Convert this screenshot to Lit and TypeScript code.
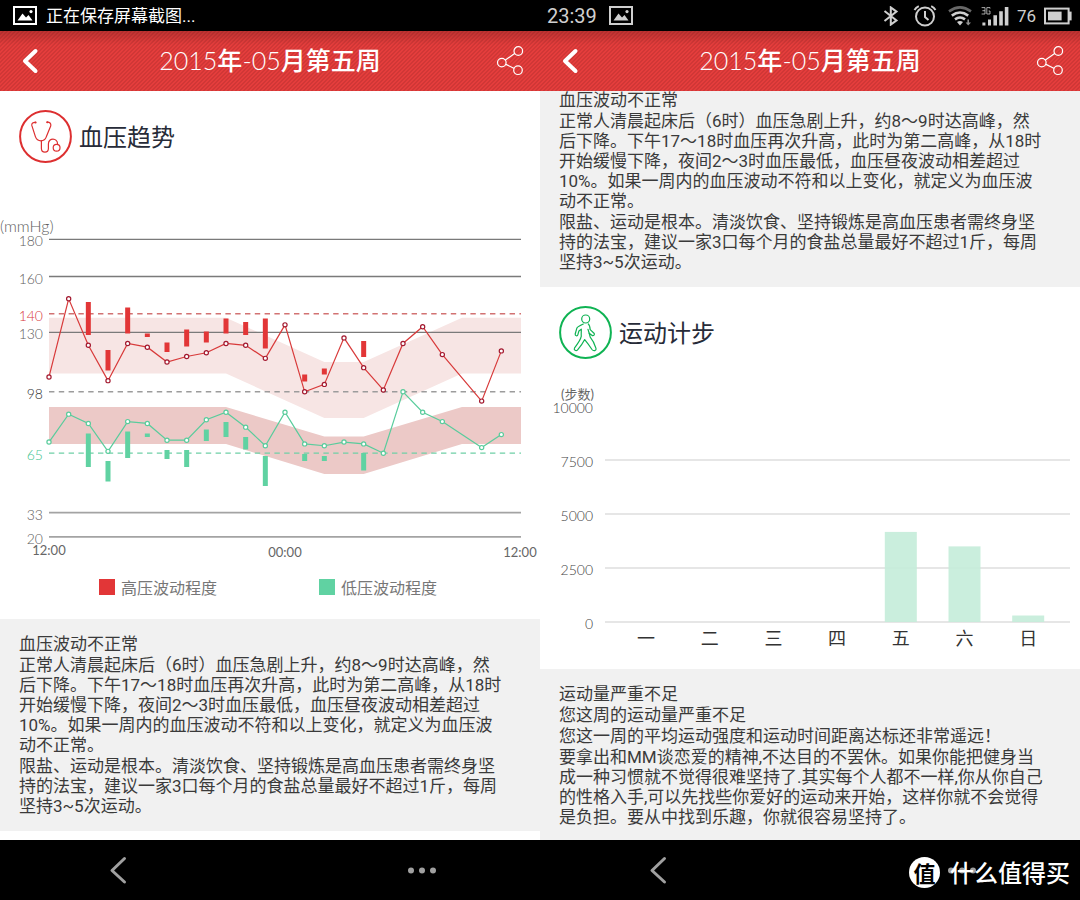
import { LitElement, html, svg, css } from "lit";
import { customElement, property } from "lit/decorators.js";

const CJK = css`"Noto Sans CJK SC", sans-serif`;

/* ---------- blood pressure trend ---------- */

const LEFT = 49;
const RIGHT = 521;
const HOUR = (RIGHT - LEFT) / 24;
const px = (hour: number) => LEFT + hour * HOUR;
const py = (mmHg: number) => 239.3 + (180 - mmHg) * 1.86;

type Reading = [hour: number, value: number];
type Span = [hour: number, top: number, bottom: number];

const HIGH: Reading[] = [
  [0, 106], [1, 148], [2, 123], [3, 104], [4, 124], [5, 122], [6, 114], [7, 117],
  [8, 119], [9, 124], [10, 123], [11, 116], [12, 134], [13, 98], [14, 102], [15, 127],
  [16, 111], [17, 99], [18, 124], [19, 133], [20, 118], [22, 93], [23, 120],
];
const LOW: Reading[] = [
  [0, 71], [1, 86], [2, 81], [3, 66], [4, 82], [5, 81], [6, 72], [7, 72],
  [8, 83], [9, 87], [10, 79], [11, 69], [12, 87], [13, 70], [14, 69], [15, 71],
  [16, 70], [17, 65], [18, 98], [19, 87], [20, 82], [22, 68], [23, 75],
];
const HIGH_SWING: Span[] = [
  [2, 302, 335], [3, 350, 370.5], [4, 307.5, 333.5], [5, 333.5, 337], [6, 342.5, 352],
  [7, 329.5, 346.5], [8, 331.5, 342.5], [9, 318.5, 333.5], [10, 322, 335],
  [11, 318.5, 348.5], [13, 374.5, 381.5], [14, 368.5, 374.5], [16, 341, 357],
];
const LOW_SWING: Span[] = [
  [2, 433.5, 467], [3, 461, 481.5], [4, 431.5, 458], [5, 433.5, 437], [6, 450, 459],
  [7, 450, 467], [8, 429.5, 441], [9, 422, 437], [10, 437, 449.5],
  [11, 456, 486], [13, 454, 461], [14, 456, 461], [16, 453, 470.5],
];
const LEVELS: { value: number; kind: string }[] = [
  { value: 180, kind: "solid" },
  { value: 160, kind: "solid" },
  { value: 140, kind: "high" },
  { value: 130, kind: "solid" },
  { value: 98, kind: "mid" },
  { value: 65, kind: "low" },
  { value: 33, kind: "pale" },
  { value: 20, kind: "pale" },
];

const band = (top: number, dipTop: number, bottom: number, dipBottom: number) =>
  [
    [px(0), top], [px(9), top], [px(14), dipTop], [px(16), dipTop], [px(21), top], [px(24), top],
    [px(24), bottom], [px(21), bottom], [px(16), dipBottom], [px(14), dipBottom], [px(9), bottom], [px(0), bottom],
  ].map((p) => p.join(",")).join(" ");

@customElement("pressure-chart")
export class PressureChart extends LitElement {
  static styles = css`
    :host { display: block; }
    .plot { display: block; width: 100%; height: auto; }
    text { font-family: Lato, ${CJK}; font-weight: 300; font-size: 14px; fill: #606060; }
    .unit { font-size: 16px; }
    .time { font-size: 13px; font-weight: 400; fill: #666; text-anchor: middle; }
    .level { text-anchor: end; }
    .level.high { fill: #d8393c; }
    .level.mid { fill: #333; }
    .level.low { fill: #3fc490; }
    .rule { stroke: #7a7a7a; stroke-width: 1.3; }
    .rule.pale { stroke: #a3a3a3; stroke-width: 1.7; }
    .rule.high, .rule.mid, .rule.low { stroke-dasharray: 5.4 4.4; }
    .rule.high { stroke: #d27272; stroke-width: 1.6; }
    .rule.mid { stroke: #9c9c9c; stroke-width: 1.6; }
    .rule.low { stroke: #6fcfa6; stroke-width: 1.2; }
    .band-high { fill: #f7e5e4; }
    .band-low { fill: #ecc9c7; }
    .swing-high { fill: #e23637; }
    .swing-low { fill: #60d2a2; }
    .line { fill: none; stroke-width: 1.2; }
    .line-high { stroke: #d83a3a; }
    .line-low { stroke: #59cc9c; }
    .dot { fill: #fff; stroke-width: 1.2; }
    .dot-high { stroke: #a3192f; }
    .dot-low { stroke: #59cc9c; }
  `;

  private series(points: Reading[], name: string) {
    return svg`
      <polyline class="line line-${name}" points=${points.map(([h, v]) => `${px(h)},${py(v)}`).join(" ")}></polyline>
      ${points.map(([h, v]) => svg`<circle class="dot dot-${name}" cx=${px(h)} cy=${py(v)} r="2.1"></circle>`)}`;
  }

  private swings(spans: Span[], name: string) {
    return spans.map(([h, top, bottom]) => svg`
      <rect class="swing-${name}" x=${px(h) - 2.5} y=${top} width="5" height=${bottom - top}></rect>`);
  }

  render() {
    return html`
      <svg class="plot" viewBox="0 163 540 402" role="img" aria-label="血压趋势">
        <polygon class="band-high" points=${band(317.7, 362, 373.5, 418)}></polygon>
        <polygon class="band-low" points=${band(407, 436.5, 444, 474)}></polygon>
        ${LEVELS.map(({ value, kind }) => svg`
          <line class="rule ${kind}" x1=${LEFT} x2=${RIGHT} y1=${py(value)} y2=${py(value)}></line>
          <text class="level ${kind}" x="43" y=${Math.round(py(value)) + 7}>${value}</text>`)}
        <text class="unit" x="0" y="232">(mmHg)</text>
        <text class="time" x="49" y="555">12:00</text>
        <text class="time" x="285" y="557">00:00</text>
        <text class="time" x="520" y="557">12:00</text>
        ${this.swings(HIGH_SWING, "high")}
        ${this.swings(LOW_SWING, "low")}
        ${this.series(HIGH, "high")}
        ${this.series(LOW, "low")}
      </svg>`;
  }
}

/* ---------- weekly steps ---------- */

const DAYS: { day: string; steps: number }[] = [
  { day: "一", steps: 0 },
  { day: "二", steps: 0 },
  { day: "三", steps: 0 },
  { day: "四", steps: 0 },
  { day: "五", steps: 4170 },
  { day: "六", steps: 3500 },
  { day: "日", steps: 300 },
];
const stepY = (steps: number) => 622 - (steps * 54) / 2500;

@customElement("steps-chart")
export class StepsChart extends LitElement {
  static styles = css`
    :host { display: block; }
    .plot { display: block; width: 100%; height: auto; }
    text { font-family: Lato, ${CJK}; font-weight: 300; font-size: 14px; fill: #444; }
    .level { text-anchor: end; }
    .unit { text-anchor: end; font-size: 13px; font-weight: 400; fill: #666; }
    .day { text-anchor: middle; font-size: 18px; font-weight: 400; fill: #333; }
    .rule { stroke: #e6e6e6; stroke-width: 2; }
    .bar { fill: #c4ecd9; fill-opacity: 0.9; }
  `;

  render() {
    return html`
      <svg class="plot" viewBox="0 359 540 310" role="img" aria-label="运动计步">
        <text class="unit" x="54" y="399">(步数)</text>
        ${[10000, 7500, 5000, 2500, 0].map((n) => svg`
          ${n < 10000 ? svg`<line class="rule" x1="65" x2="530" y1=${stepY(n)} y2=${stepY(n)}></line>` : null}
          <text class="level" x="53" y=${stepY(n) + 7}>${n}</text>`)}
        ${DAYS.map(({ day, steps }, i) => svg`
          ${steps ? svg`<rect class="bar" x=${90 + i * 63.7} y=${stepY(steps)} width="32" height=${622 - stepY(steps)}></rect>` : null}
          <text class="day" x=${106 + i * 63.7} y="645">${day}</text>`)}
      </svg>`;
  }
}

/* ---------- section title, legend, advice ---------- */

@customElement("section-title")
export class SectionTitle extends LitElement {
  @property() icon = "pressure";
  @property() label = "";

  static styles = css`
    :host { display: block; }
    .head { display: flex; align-items: center; gap: 7px; padding: 19px 19px 0; }
    .badge { display: block; width: 53px; height: 53px; fill: none; stroke-linecap: round; stroke-linejoin: round; stroke-width: 1.2; }
    .badge.pressure { stroke: #dd2f30; }
    .badge.walk { stroke: #0fb353; }
    .ring { stroke-width: 2; }
    .name { margin: 0; padding-bottom: 2px; font: 400 24px/32px ${CJK}; color: #272b38; }
  `;

  render() {
    const glyph = this.icon === "walk"
      ? svg`
        <circle cx="26.7" cy="13" r="4"></circle>
        <path d="M24.3 18C21.5 19.2 18.5 20.6 17.8 22.3L16.2 28C16 30 18.4 30.4 18.8 28.8L19.9 25L22.3 23.2C22.4 26 22 28 22.3 30.2C21.6 34 19 37.5 15.6 41.8C14.4 44 17 45.6 18.6 43.8C21.6 40.5 24 37 25.7 33.6C28.5 37 31 40.5 33 43.5C34.6 45.6 37.6 44.6 37 42.4C35.8 38.5 34 34.5 31.2 31.2L30.2 27.3L33.2 29.6C35 30 36 28.4 35 27.2L31.2 23.6C31 21 30.6 19 29.3 18"></path>
        <path d="M29 23.4L30.2 27.3"></path>`
      : svg`
        <path d="M16.6 12.4C14.2 12.2 12.4 13.2 12.8 15.4L16.4 26.6C17.4 29.4 19.4 30.8 22 30.8C24.6 30.8 26.4 29.4 27.4 26.6L31.8 15.8C32.2 13.4 30.6 12 28.2 12.2"></path>
        <path d="M22.4 30.8V38.6C22.4 43.4 29.4 43.4 29.4 38.6V34C29.4 27.4 38.6 27.4 38.6 34.2"></path>
        <circle cx="37.6" cy="37.8" r="3.4"></circle>
        <path class="ring" d="M16.4 12.4H16.6M28.2 12.2H28.4"></path>`;
    return html`
      <div class="head">
        <svg class="badge ${this.icon}" viewBox="0 0 53 53" aria-hidden="true">
          <circle class="ring" cx="26.5" cy="26.5" r="25.4"></circle>
          ${glyph}
        </svg>
        <h2 class="name">${this.label}</h2>
      </div>`;
  }
}

/** Each paragraph is a list of its lines. */
@customElement("advice-block")
export class AdviceBlock extends LitElement {
  @property({ attribute: false }) paragraphs: string[][] = [];

  static styles = css`
    :host { display: block; }
    .advice { display: flex; flex-direction: column; gap: 1px; padding: 15px 0 15px 19px; background: #f1f1f1; }
    .para { margin: 0; font: 400 17px/20px Roboto, ${CJK}; color: #3a3a3a; white-space: nowrap; }
    .row { display: block; }
  `;

  render() {
    return html`
      <div class="advice">
        ${this.paragraphs.map((rows) => html`<p class="para">${rows.map((r) => html`<span class="row">${r}</span>`)}</p>`)}
      </div>`;
  }
}

const PRESSURE_ADVICE = [
  ["血压波动不正常"],
  [
    "正常人清晨起床后（6时）血压急剧上升，约8～9时达高峰，然",
    "后下降。下午17～18时血压再次升高，此时为第二高峰，从18时",
    "开始缓慢下降，夜间2～3时血压最低，血压昼夜波动相差超过",
    "10%。如果一周内的血压波动不符和以上变化，就定义为血压波",
    "动不正常。",
  ],
  [
    "限盐、运动是根本。清淡饮食、坚持锻炼是高血压患者需终身坚",
    "持的法宝，建议一家3口每个月的食盐总量最好不超过1斤，每周",
    "坚持3~5次运动。",
  ],
];
const STEPS_ADVICE = [
  ["运动量严重不足"],
  ["您这周的运动量严重不足"],
  ["您这一周的平均运动强度和运动时间距离达标还非常遥远！"],
  [
    "要拿出和MM谈恋爱的精神,不达目的不罢休。如果你能把健身当",
    "成一种习惯就不觉得很难坚持了.其实每个人都不一样,你从你自己",
    "的性格入手,可以先找些你爱好的运动来开始，这样你就不会觉得",
    "是负担。要从中找到乐趣，你就很容易坚持了。",
  ],
];

/* ---------- phone chrome ---------- */

@customElement("phone-screen")
export class PhoneScreen extends LitElement {
  static styles = css`
    :host { display: flex; flex-direction: column; min-width: 0; overflow: hidden; }
    .status { display: flex; align-items: center; height: 31px; background: #000; }
    .bar { display: flex; align-items: center; justify-content: space-between; height: 60px; padding: 0 15px;
      background:
        linear-gradient(rgba(90, 20, 20, 0.28), rgba(90, 20, 20, 0) 14px),
        linear-gradient(135deg, #e43d3c 0 25%, #d03736 25% 50%, #e43d3c 50% 75%, #d03736 75%) 0 0 / 4px 4px; }
    .title { margin: 0; padding-bottom: 2px; font: 300 25px/36px Lato, ${CJK}; color: #fff; }
    .han { font-weight: 500; }
    .tap { display: flex; align-items: center; justify-content: center; padding: 0; border: 0; background: none; cursor: pointer; }
    .tap svg { display: block; fill: none; stroke-linecap: round; stroke-linejoin: round; }
    .bar .tap { width: 30px; height: 44px; stroke: #fff; }
    .body { flex: 1; min-height: 0; overflow: hidden; background: #fff; }
    .nav { display: flex; align-items: center; justify-content: space-between; height: 60px; padding: 0 96px; background: #000; }
    .nav .tap { width: 44px; height: 44px; stroke: #a0a0a0; }
    .nav .dots { fill: #a0a0a0; stroke: none; }
  `;

  render() {
    return html`
      <div class="status"><slot name="status"></slot></div>
      <header class="bar">
        <button class="tap" aria-label="返回">
          <svg width="30" height="30" viewBox="0 0 30 30" stroke-width="4"><path d="M20.5 5L10 15L20.5 25"></path></svg>
        </button>
        <h1 class="title">2015<span class="han">年</span>-05<span class="han">月第五周</span></h1>
        <button class="tap" aria-label="分享">
          <svg width="30" height="30" viewBox="0 0 30 30" stroke-width="1.2">
            <circle cx="23.3" cy="5" r="4.3"></circle>
            <circle cx="6.8" cy="16.6" r="4.3"></circle>
            <circle cx="23" cy="24.2" r="4.3"></circle>
            <path d="M10.4 14L19.6 7.6M11 18.4L18.8 22.2"></path>
          </svg>
        </button>
      </header>
      <main class="body"><slot></slot></main>
      <nav class="nav">
        <button class="tap" aria-label="后退">
          <svg width="30" height="30" viewBox="0 0 30 30" stroke-width="3"><path d="M21.5 3.5L9 15.5L21.5 27"></path></svg>
        </button>
        <button class="tap" aria-label="更多">
          <svg class="dots" width="30" height="30" viewBox="0 0 30 30">
            <circle cx="4" cy="15.5" r="3"></circle><circle cx="15" cy="15.5" r="3"></circle><circle cx="26" cy="15.5" r="3"></circle>
          </svg>
        </button>
      </nav>`;
  }
}

const picture = html`
  <svg class="sys" width="24" height="19" viewBox="0 0 24 19" aria-hidden="true">
    <rect x="1" y="1" width="22" height="17" fill="none" stroke="currentColor" stroke-width="2"></rect>
    <path d="M4.5 14.5L9.5 7.5L13 11.5L15.5 9L19.5 14.5Z" fill="currentColor"></path>
    <circle cx="18" cy="5.6" r="1.6" fill="currentColor"></circle>
  </svg>`;

@customElement("app-root")
export class AppRoot extends LitElement {
  static styles = css`
    :host { display: block; }
    .stage { position: relative; display: grid; grid-template-columns: 1fr 1fr; height: 100vh; min-height: 600px; background: #fff; }
    .status { display: flex; flex: 1; align-items: center; }
    .left { gap: 9px; padding-left: 13px; color: #fff; }
    .right { gap: 8px; padding: 0 8px 0 7px; color: #cfcfcf; }
    .saving { font: 400 17px/24px Roboto, ${CJK}; }
    .clock { font: 400 20px/24px Roboto, sans-serif; margin-right: 4px; }
    .charge { font: 400 17px/24px Roboto, sans-serif; }
    .sys { display: block; flex: none; }
    .push { margin-left: auto; }
    .stroke { fill: none; stroke: currentColor; stroke-width: 2; }
    .arc { fill: none; stroke: currentColor; stroke-width: 2.6; }
    .fill { fill: currentColor; }
    .legend { display: grid; grid-template-columns: 220px auto; padding: 13px 0 23px 99px; }
    .key { display: flex; align-items: center; gap: 6px; font: 400 16px/18px ${CJK}; color: #777; }
    .swatch { width: 16px; height: 16px; }
    .swatch.high { background: #e23637; }
    .swatch.low { background: #60d2a2; }
    .scrolled { margin-top: -16px; }
    .mark { position: absolute; right: 10px; bottom: 12px; display: flex; align-items: center; gap: 10px;
      font: 500 24px/32px ${CJK}; color: #fff; pointer-events: none; }
    .seal { display: flex; align-items: center; justify-content: center; width: 31px; height: 31px; border-radius: 50%;
      background: #fff; color: #000; font-size: 22px; font-weight: 700; }
  `;

  render() {
    return html`
      <div class="stage">
        <phone-screen>
          <div slot="status" class="status left">
            ${picture}
            <span class="saving">正在保存屏幕截图...</span>
          </div>
          <section-title icon="pressure" label="血压趋势"></section-title>
          <pressure-chart></pressure-chart>
          <div class="legend">
            <span class="key"><span class="swatch high"></span>高压波动程度</span>
            <span class="key"><span class="swatch low"></span>低压波动程度</span>
          </div>
          <advice-block .paragraphs=${PRESSURE_ADVICE}></advice-block>
        </phone-screen>

        <phone-screen>
          <div slot="status" class="status right">
            <span class="clock">23:39</span>
            ${picture}
            <svg class="sys push" width="26" height="20" viewBox="0 0 26 20" aria-label="蓝牙">
              <path class="stroke" d="M6.5 5L18.5 14.4L12.8 18.6V1.4L18.5 5.6L6.5 15"></path>
            </svg>
            <svg class="sys" width="26" height="22" viewBox="0 0 26 22" aria-label="闹钟">
              <circle class="stroke" cx="13" cy="11.5" r="9"></circle>
              <path class="stroke" d="M13 6V12L16.5 15M2.5 5Q4 2.4 6.8 1.2M23.5 5Q22 2.4 19.2 1.2"></path>
            </svg>
            <svg class="sys" width="27" height="20" viewBox="0 0 27 20" aria-label="无线网络">
              <path class="arc" opacity="0.5" d="M3 5.4Q14 -2.6 25 5.4"></path>
              <path class="arc" d="M5.8 9.6Q14 3.4 22.2 9.6M9 13.4Q14 9.6 19 13.4"></path>
              <path class="fill" d="M11 16Q14 14 17 16L14 19.4Z"></path>
              <path class="fill" d="M21.4 13.6H23V16.4H25L22.2 19.4L19.6 16.4H21.4Z" opacity="0.7"></path>
            </svg>
            <svg class="sys" width="28" height="20" viewBox="0 0 28 20" aria-label="3G 信号">
              <path d="M0.6 1.6H4V8H0.6M1.4 4.7H4M9 2.6V1.6H5.8V8H9V5H7.6" fill="none" stroke="currentColor" stroke-width="1" opacity="0.8"></path>
              <path class="fill" d="M1.4 16.4H4.4V19.4H1.4ZM7 13.4H10V19.4H7ZM12.4 9.2H16V19.4H12.4ZM18.2 5.2H21.8V19.4H18.2ZM23.8 1H27.4V19.4H23.8Z"></path>
            </svg>
            <span class="charge">76</span>
            <svg class="sys" width="28" height="18" viewBox="0 0 28 18" aria-label="电池">
              <rect class="stroke" x="1" y="1.6" width="23.6" height="14.8"></rect>
              <rect class="fill" x="4" y="4.6" width="13.6" height="8.8"></rect>
              <path class="fill" d="M25 4.6H27.6V13.4H25Z"></path>
            </svg>
          </div>
          <advice-block class="scrolled" .paragraphs=${PRESSURE_ADVICE}></advice-block>
          <section-title icon="walk" label="运动计步"></section-title>
          <steps-chart></steps-chart>
          <advice-block .paragraphs=${STEPS_ADVICE}></advice-block>
        </phone-screen>

        <div class="mark"><span class="seal">值</span>什么值得买</div>
      </div>`;
  }
}
